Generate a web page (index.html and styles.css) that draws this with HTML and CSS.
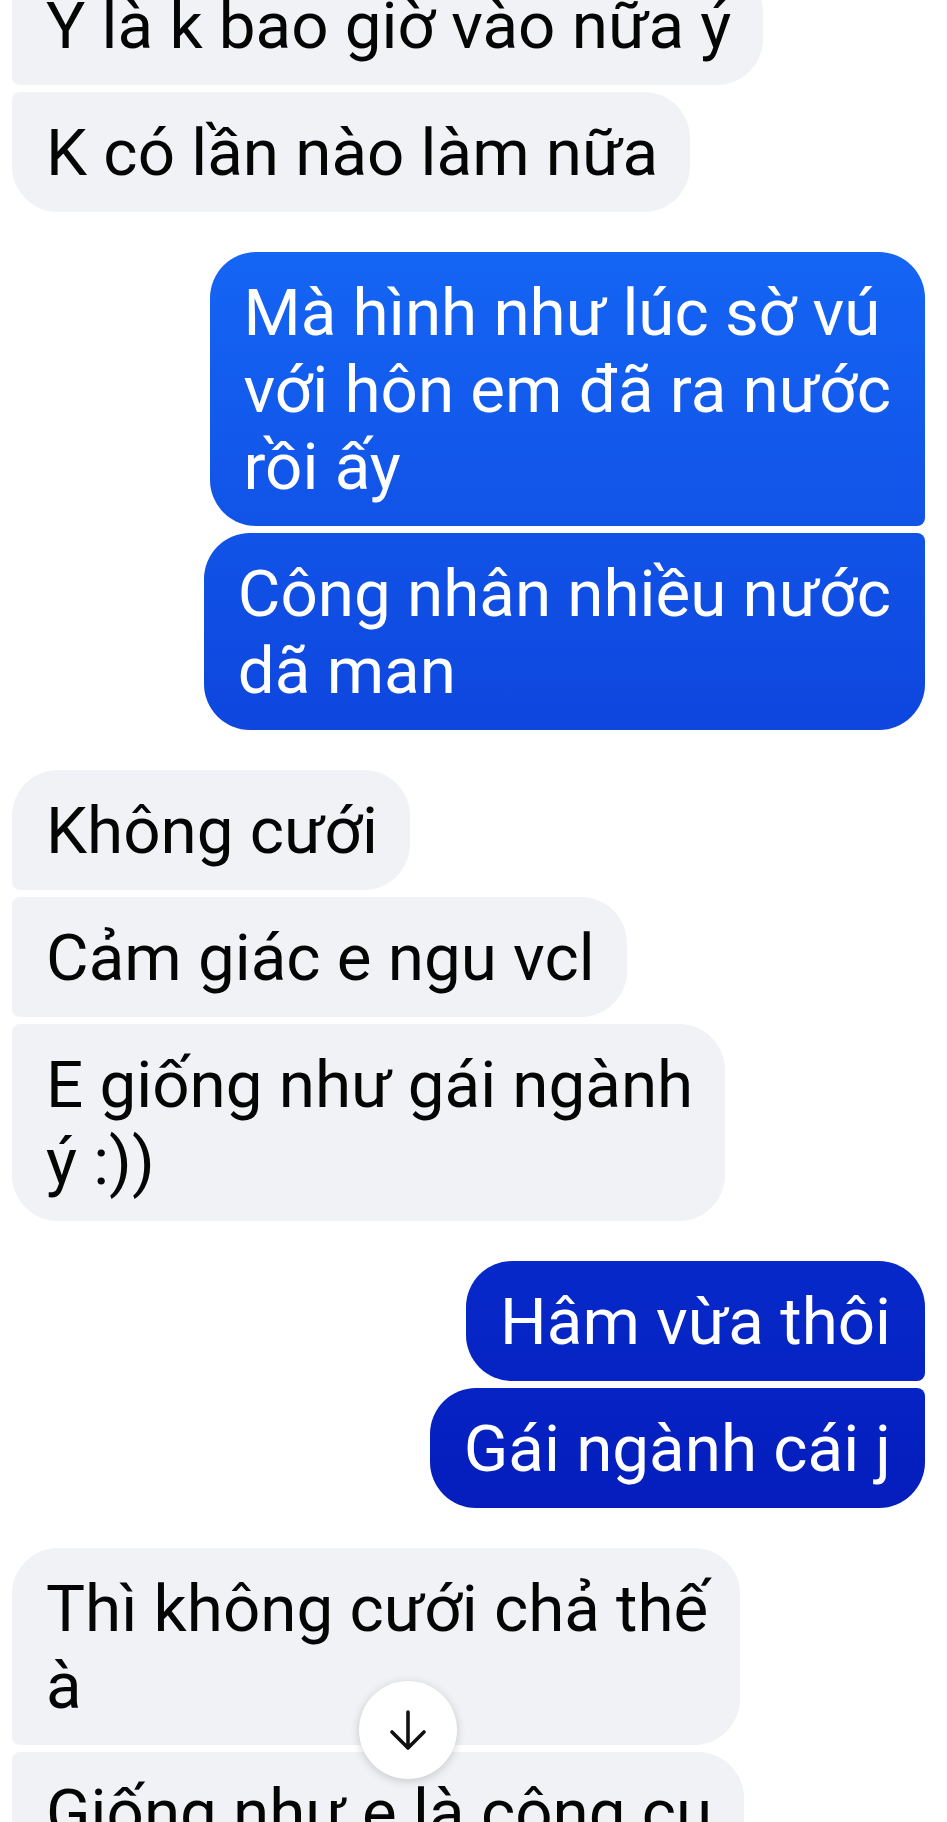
FILE: index.html
```html
<!DOCTYPE html>
<html lang="vi">
<head>
<meta charset="utf-8">
<title>Messenger</title>
<link rel="stylesheet" href="styles.css">
</head>
<body>
<div class="screen">
  <div class="thread">
    <div class="group in">
      <div class="bubble mid">Y là k bao giờ vào nữa ý</div>
      <div class="bubble last">K có lần nào làm nữa</div>
    </div>
    <div class="group out">
      <div class="bubble first">Mà hình như lúc sờ vú<br>với hôn em đã ra nước<br>rồi ấy</div>
      <div class="bubble last">Công nhân nhiều nước<br>dã man</div>
    </div>
    <div class="group in">
      <div class="bubble first">Không cưới</div>
      <div class="bubble mid">Cảm giác e ngu vcl</div>
      <div class="bubble last">E giống như gái ngành<br>ý :))</div>
    </div>
    <div class="group out">
      <div class="bubble first">Hâm vừa thôi</div>
      <div class="bubble last">Gái ngành cái j</div>
    </div>
    <div class="group in">
      <div class="bubble first">Thì không cưới chả thế<br>à</div>
      <div class="bubble mid">Giống như e là công cụ</div>
    </div>
  </div>
  <button class="scroll-down" aria-label="Cuộn xuống">
    <svg width="98" height="98" viewBox="0 0 98 98" aria-hidden="true">
      <path d="M49 31 V66 M33 51 L49 67 L65 51" fill="none" stroke="#111" stroke-width="3.6" stroke-linecap="round" stroke-linejoin="round"/>
    </svg>
  </button>
</div>
</body>
</html>
```

FILE: styles.css
```css
html, body {
  margin: 0;
  padding: 0;
  background: #ffffff;
}

.screen {
  position: relative;
  width: 947px;
  height: 1822px;
  overflow: hidden;
  font-family: Roboto, "Noto Sans", sans-serif;
  font-size: 65.5px;
  line-height: 77px;
}

.thread {
  display: flex;
  flex-direction: column;
  gap: 40px;
  margin-top: -35px;
}

.group {
  display: flex;
  flex-direction: column;
  gap: 7px;
}

.bubble {
  white-space: nowrap;
  padding: 22px 32px 21px 34px;
  border-radius: 46px;
}

.in {
  align-items: flex-start;
  padding-left: 12px;
}

.in .bubble {
  background: #f0f2f5;
  color: #050505;
}

.in .first { border-bottom-left-radius: 8px; }
.in .mid { border-top-left-radius: 8px; border-bottom-left-radius: 8px; }
.in .last { border-top-left-radius: 8px; }

.out {
  align-items: flex-end;
  padding-right: 22px;
}

.out .bubble {
  color: #ffffff;
  padding-right: 34px;
  background: linear-gradient(to bottom,
    #1870ff 0px,
    #1565f4 250px,
    #0e46de 730px,
    #0729c9 1260px,
    #051dbd 1510px,
    #0416b2 1822px) fixed;
}

.out .first { border-bottom-right-radius: 8px; }
.out .mid { border-top-right-radius: 8px; border-bottom-right-radius: 8px; }
.out .last { border-top-right-radius: 8px; }

.scroll-down {
  position: absolute;
  left: 359px;
  top: 1681px;
  width: 98px;
  height: 98px;
  padding: 0;
  border: none;
  border-radius: 50%;
  background: #ffffff;
  box-shadow: 0 2px 10px rgba(0, 0, 0, 0.18);
  display: flex;
  align-items: center;
  justify-content: center;
}

.scroll-down svg {
  display: block;
}
```
